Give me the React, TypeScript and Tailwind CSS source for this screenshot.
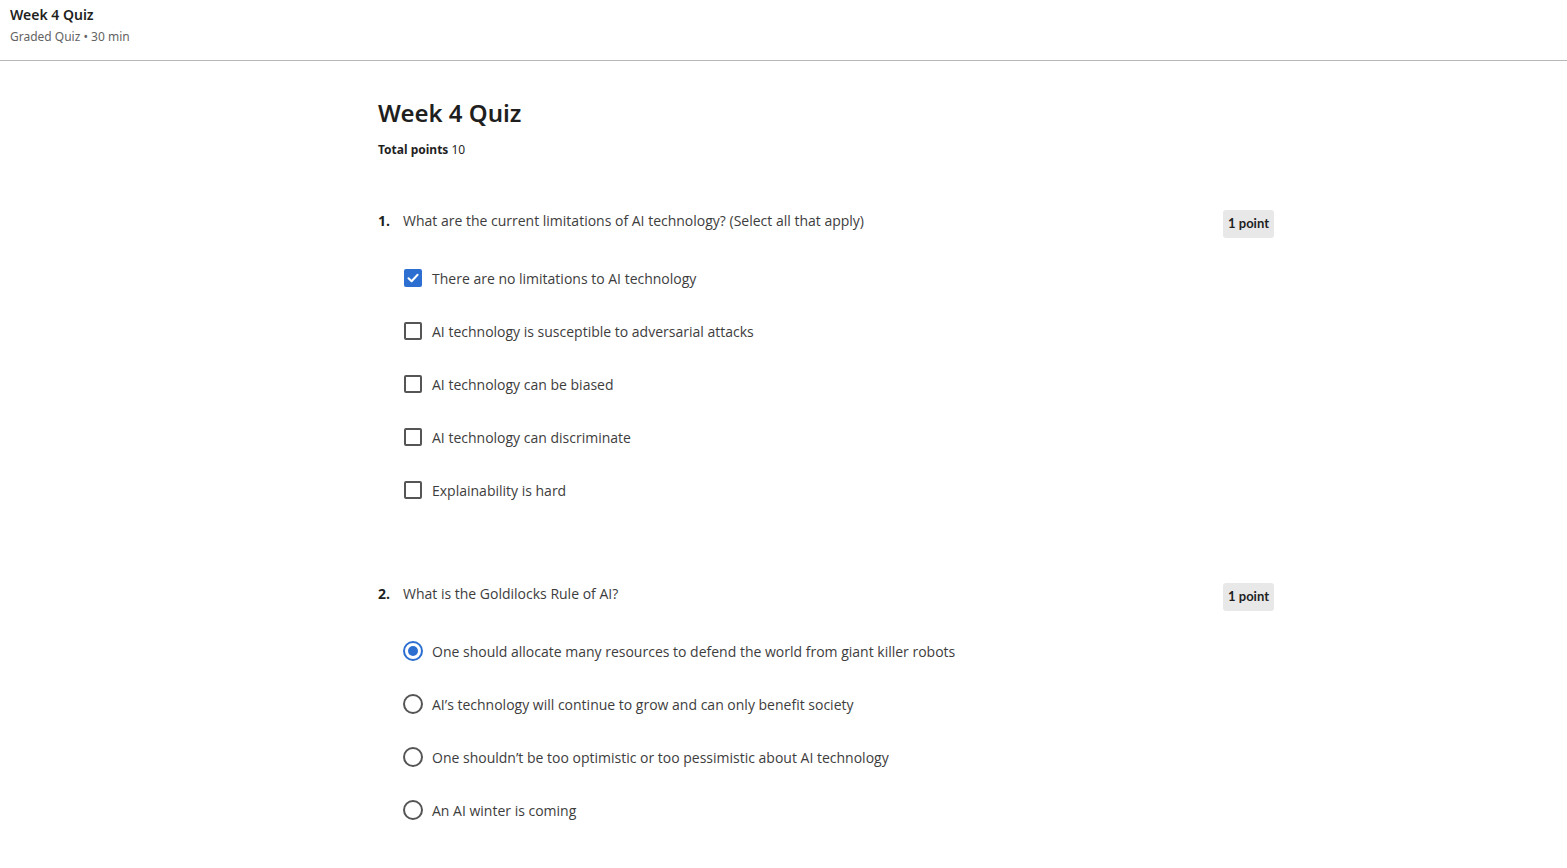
import React from 'react';

const sans = { fontFamily: '"Open Sans", "Noto Sans", sans-serif' };
const head = { fontFamily: '"Noto Sans", "Open Sans", sans-serif' };
const badge = { fontFamily: 'Lato, "Noto Sans", sans-serif' };

type Question = {
  num: number;
  text: string;
  kind: 'check' | 'radio';
  options: { label: string; selected: boolean }[];
};

const questions: Question[] = [
  {
    num: 1,
    text: 'What are the current limitations of AI technology? (Select all that apply)',
    kind: 'check',
    options: [
      { label: 'There are no limitations to AI technology', selected: true },
      { label: 'AI technology is susceptible to adversarial attacks', selected: false },
      { label: 'AI technology can be biased', selected: false },
      { label: 'AI technology can discriminate', selected: false },
      { label: 'Explainability is hard', selected: false },
    ],
  },
  {
    num: 2,
    text: 'What is the Goldilocks Rule of AI?',
    kind: 'radio',
    options: [
      { label: 'One should allocate many resources to defend the world from giant killer robots', selected: true },
      { label: 'AI\u2019s technology will continue to grow and can only benefit society', selected: false },
      { label: 'One shouldn\u2019t be too optimistic or too pessimistic about AI technology', selected: false },
      { label: 'An AI winter is coming', selected: false },
    ],
  },
];

function Box({ kind, selected }: { kind: 'check' | 'radio'; selected: boolean }) {
  if (kind === 'check') {
    return selected ? (
      <span className="w-[18px] h-[18px] rounded-[2px] bg-[#2c6fd1] flex items-center justify-center shrink-0">
        <svg width="14" height="14" viewBox="0 0 14 14" fill="none">
          <path d="M2.5 7.2 L5.6 10.2 L11.6 3.8" stroke="white" strokeWidth="2" strokeLinecap="round" strokeLinejoin="round" />
        </svg>
      </span>
    ) : (
      <span className="w-[18px] h-[18px] rounded-[2px] border-2 border-[#555] shrink-0" />
    );
  }
  return selected ? (
    <span className="w-[20px] h-[20px] rounded-full border-2 border-[#2c6fd1] flex items-center justify-center shrink-0">
      <span className="w-[10px] h-[10px] rounded-full bg-[#2c6fd1]" />
    </span>
  ) : (
    <span className="w-[20px] h-[20px] rounded-full border-2 border-[#555] shrink-0" />
  );
}

function QuestionBlock({ q }: { q: Question }) {
  return (
    <div>
      <div className="flex items-start justify-between">
        <div className="flex items-baseline pt-[1px]">
          <span className="w-[25px] text-[14px] font-bold text-[#1f1f1f]" style={sans}>{q.num}.</span>
          <span className="text-[14px] text-[#3d3d3d]" style={sans}>{q.text}</span>
        </div>
        <span className="mt-[1px] h-[28px] px-[5px] flex items-center rounded-[3px] bg-[#e8e8e8] text-[13px] font-bold text-[#1f1f1f]" style={badge}>
          1 point
        </span>
      </div>
      <div className="ml-[25px] mt-[30px] flex flex-col gap-[33px]">
        {q.options.map((o) => (
          <div key={o.label} className="flex items-center h-[20px]">
            <span className="w-[20px] flex justify-center">
              <Box kind={q.kind} selected={o.selected} />
            </span>
            <span className="ml-[9px] text-[14px] text-[#3d3d3d]" style={sans}>{o.label}</span>
          </div>
        ))}
      </div>
    </div>
  );
}

export default function App() {
  return (
    <div className="min-h-screen bg-white">
      <header className="h-[61px] border-b border-[#b8b8b8] px-[10px] pt-[5px]">
        <div className="text-[14px] font-semibold text-[#1f1f1f] leading-[20px]" style={head}>Week 4 Quiz</div>
        <div className="text-[12px] text-[#636363] leading-[18px] mt-[3px]" style={head}>Graded Quiz &bull; 30 min</div>
      </header>
      <main className="w-[896px] ml-[378px] pt-[34px]">
        <h1 className="text-[24px] font-semibold text-[#1f1f1f] leading-[36px]" style={head}>Week 4 Quiz</h1>
        <p className="mt-[10px] text-[12px] text-[#1f1f1f]" style={head}>
          <span className="font-bold">Total points</span> 10
        </p>
        <div className="mt-[50px] flex flex-col gap-[82px]">
          {questions.map((q) => (
            <QuestionBlock key={q.num} q={q} />
          ))}
        </div>
      </main>
    </div>
  );
}
